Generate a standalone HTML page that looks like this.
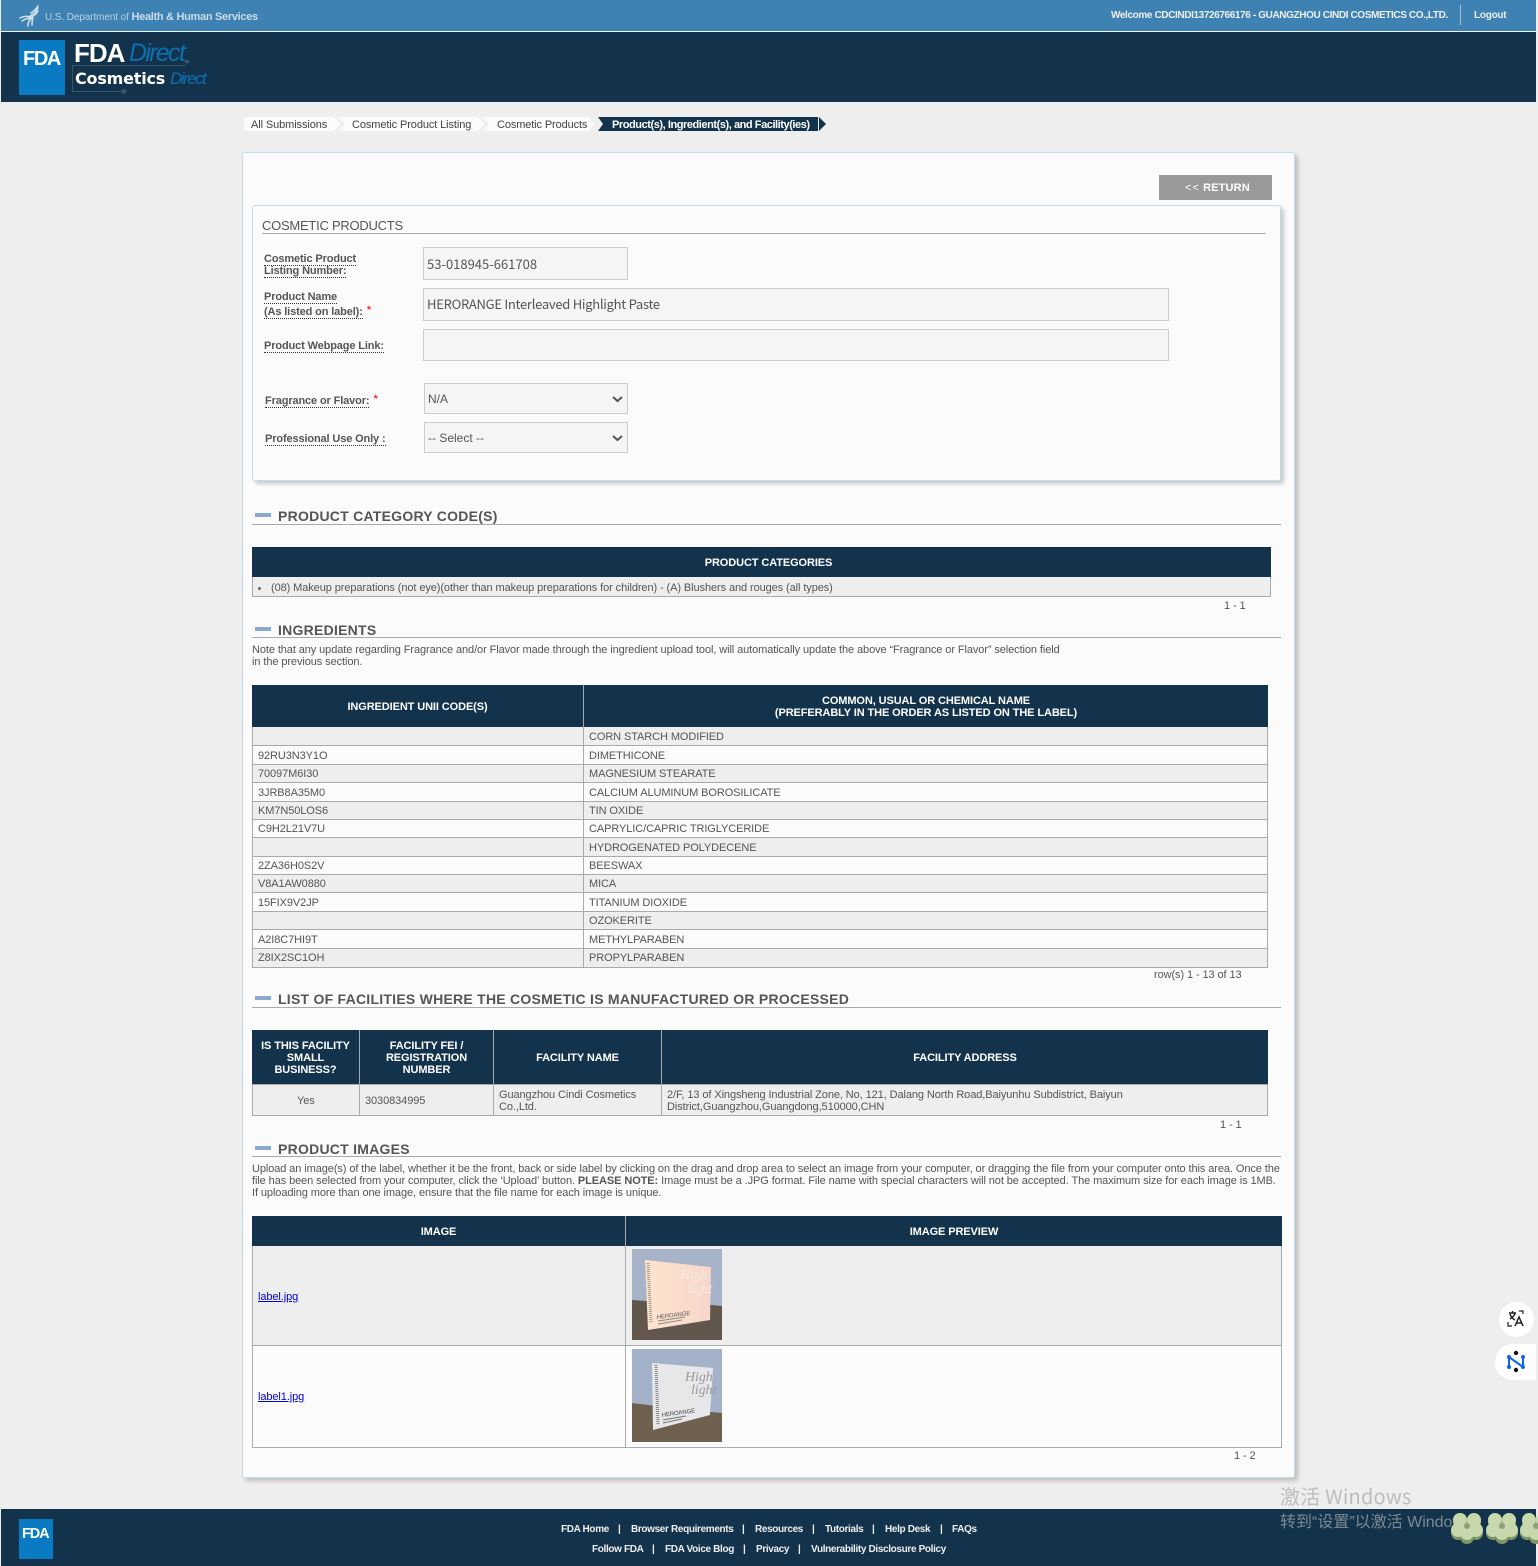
<!DOCTYPE html>
<html lang="en"><head><meta charset="utf-8"><title>FDA Direct - Cosmetics Direct</title>
<style>
html,body{margin:0;padding:0}
body{position:relative;width:1538px;height:1566px;overflow:hidden;background:#eee;font-family:"Liberation Sans",Arial,sans-serif;font-size:11px;letter-spacing:-.09px;color:#555}
div,span,a{box-sizing:border-box}
.a{position:absolute}
.t{position:absolute;white-space:nowrap;line-height:12px}
.b{font-weight:bold}
.box{position:absolute;background:#fbfbfb;border:1px solid #c3dcea;border-radius:3px;box-shadow:3px 3px 4px rgba(0,0,0,.2)}
.th{position:absolute;color:#fff;font-weight:bold;font-size:11px;text-align:center;line-height:12px;display:flex;align-items:center;justify-content:center;background:#12334b;letter-spacing:-.1px;padding-top:2px}
.h2{position:absolute;white-space:nowrap;font-size:14px;line-height:16px;font-weight:bold;color:#555;letter-spacing:.25px}
.dash{position:absolute;left:255px;width:16px;height:4px;background:#8aa9cf}
.hr{position:absolute;height:1px;background:#aaa}
.lab{position:absolute;white-space:nowrap;font-weight:bold;font-size:11px;line-height:12px;color:#555;letter-spacing:-.13px}
.lab span{border-bottom:1px dotted #333}
.in{position:absolute;background:#f5f5f5;border:1px solid #ccc;font-family:"Noto Sans CJK SC",sans-serif;font-size:13px;letter-spacing:0;color:#555;padding-left:3px;display:flex;align-items:center}
.sel{font-family:"Liberation Sans",sans-serif;font-size:12px}
.sel svg{position:absolute;right:4px;top:50%;margin-top:-4px}
.star{color:#e00;font-weight:normal;font-size:12px;position:relative;top:-1px;margin-left:1px}
.row{position:absolute;left:252px;width:1016px;height:19px;border:1px solid #aaa;border-top:0}
.row .l,.row .r{position:absolute;top:4px;line-height:12px;white-space:nowrap}
.row.s{height:18px}
.row.s .l,.row.s .r{top:3px}
.row .l{left:5px}.row .r{left:336px}
.row i{position:absolute;left:330px;top:0;bottom:0;width:1px;background:#aaa}
.g{background:#eee}.w{background:#fbfbfb}
a{color:#00d;text-decoration:underline}
.f{position:absolute;white-space:nowrap;color:#eee;font-weight:bold;font-size:10px;line-height:12px;letter-spacing:-.35px}
.ln{position:absolute;background:#aaa}
</style></head><body>

<!-- top bars -->
<div class="a" style="left:1px;top:0;width:1535px;height:31px;background:#3e82b3"></div>
<div class="a" style="left:1px;top:31px;width:1535px;height:1px;background:#eef4f8"></div>
<div class="a" style="left:1px;top:32px;width:1535px;height:70px;background:#12334b"></div>

<svg class="a" style="left:19px;top:5px" width="22" height="22" viewBox="0 0 22 22" fill="none" stroke="#d5e2ec" stroke-width="1.5" stroke-linecap="round">
<path d="M19 1C17 4 15 6 12 8"/><path d="M19 3C17 7 15 9 11 11"/><path d="M19 6C17 10 14 12 9 13"/><path d="M1 13C5 11 8 11 11 12"/><path d="M3 16C6 14 9 13 12 14"/><path d="M9 21C9 18 10 15 13 13"/><path d="M13 20C13 17 13 15 14 13"/>
</svg>
<div class="t" style="left:45px;top:11px;font-size:10px;color:#b9d0e0;letter-spacing:-.1px">U.S. Department of <span class="b" style="font-size:11px;letter-spacing:-.3px;color:#c9dbe8">Health &amp; Human Services</span></div>
<div class="t b" style="left:1111px;top:10px;font-size:10px;color:#eee;letter-spacing:-.38px">Welcome CDCINDI13726766176 - GUANGZHOU CINDI COSMETICS CO.,LTD.</div>
<div class="a" style="left:1460px;top:5px;width:1px;height:20px;background:#a9bdcb"></div>
<div class="t b" style="left:1474px;top:10px;font-size:10px;color:#eee;letter-spacing:-.25px">Logout</div>

<!-- logo -->
<div class="a" style="left:19px;top:40px;width:46px;height:55px;background:#0a7bc2"></div>
<div class="t b" style="left:23px;top:48px;font-size:20px;line-height:22px;color:#fff;letter-spacing:-1.4px">FDA</div>
<div class="t b" style="left:74px;top:39px;font-size:26px;line-height:28px;color:#fff;letter-spacing:-1px">FDA</div>
<div class="t" style="left:129px;top:39px;font-size:25px;line-height:28px;color:#0c70b0;font-style:italic;letter-spacing:-1.7px">Direct</div>
<svg class="a" style="left:70px;top:60px" width="125" height="34" viewBox="0 0 125 34" fill="none" stroke="#3b5568"><path d="M116 5.5H2.5V31.5H53"/><circle cx="117" cy="1" r="2" fill="#3b5568"/><circle cx="54" cy="31.5" r="2" fill="#3b5568"/></svg>
<div class="t b" style="left:75px;top:70px;font-family:'DejaVu Sans',sans-serif;font-size:16px;line-height:18px;color:#fff;letter-spacing:-.2px">Cosmetics</div>
<div class="t" style="left:170px;top:70px;font-size:17px;line-height:18px;color:#0c70b0;font-style:italic;letter-spacing:-1.5px">Direct</div>

<!-- breadcrumb -->
<div class="a" style="left:244px;top:117px;width:350px;height:14px;background:#fbfbfb"></div>
<svg class="a" style="left:330px;top:117px" width="270" height="14"><path d="M4 0 11 7 4 14H8L15 7 8 0ZM148 0 155 7 148 14H152L159 7 152 0ZM258 0 265 7 258 14H268V0Z" fill="#eee"/></svg>
<div class="t" style="left:251px;top:119px;font-size:11px;color:#444;letter-spacing:-.1px">All Submissions</div>
<div class="t" style="left:352px;top:119px;font-size:11px;color:#444;letter-spacing:-.1px">Cosmetic Product Listing</div>
<div class="t" style="left:497px;top:119px;font-size:11px;color:#444;letter-spacing:-.12px">Cosmetic Products</div>
<svg class="a" style="left:598px;top:117px" width="229" height="15"><path d="M0 0H220V14H0L5 7Z" fill="#12334b"/><path d="M221 0 228 7 221 14Z" fill="#12334b"/></svg>
<div class="t" style="left:612px;top:119px;font-size:11px;color:#fff;font-weight:bold;letter-spacing:-.44px">Product(s), Ingredient(s), and Facility(ies)</div>

<!-- main card -->
<div class="box" style="left:242px;top:152px;width:1053px;height:1326px"></div>
<div class="a b" style="left:1159px;top:175px;width:113px;height:25px;background:#999;color:#fff;font-size:11px;line-height:27px;padding-left:26px;letter-spacing:.15px"><span style="font-weight:normal;letter-spacing:1px">&lt;&lt;</span> RETURN</div>

<!-- cosmetic products box -->
<div class="box" style="left:252px;top:205px;width:1029px;height:276px"></div>
<div class="t" style="left:262px;top:218px;font-size:13px;line-height:15px;color:#555;letter-spacing:-.25px">COSMETIC PRODUCTS</div>
<div class="hr" style="left:262px;top:233px;width:1004px"></div>

<div class="lab" style="left:264px;top:253px"><span>Cosmetic Product</span><br><span>Listing Number:</span></div>
<div class="lab" style="left:264px;top:291px"><span>Product Name</span></div>
<div class="lab" style="left:264px;top:305px"><span>(As listed on label):</span> <b class="star">*</b></div>
<div class="lab" style="left:264px;top:340px"><span>Product Webpage Link:</span></div>
<div class="lab" style="left:265px;top:394px"><span>Fragrance or Flavor:</span> <b class="star">*</b></div>
<div class="lab" style="left:265px;top:433px"><span>Professional Use Only :</span></div>

<div class="in" style="left:423px;top:247px;width:205px;height:33px">53-018945-661708</div>
<div class="in" style="left:423px;top:288px;width:746px;height:33px;padding-bottom:2px;letter-spacing:-.27px">HERORANGE Interleaved Highlight Paste</div>
<div class="in" style="left:423px;top:329px;width:746px;height:32px"></div>
<div class="in sel" style="left:424px;top:383px;width:204px;height:31px">N/A<svg width="11" height="8" viewBox="0 0 11 8"><path d="M1 2L5.5 6 10 2" fill="none" stroke="#555" stroke-width="2"/></svg></div>
<div class="in sel" style="left:424px;top:422px;width:204px;height:31px">-- Select --<svg width="11" height="8" viewBox="0 0 11 8"><path d="M1 2L5.5 6 10 2" fill="none" stroke="#555" stroke-width="2"/></svg></div>

<!-- categories -->
<div class="dash" style="top:513px"></div>
<div class="h2" style="left:278px;top:508px">PRODUCT CATEGORY CODE(S)</div>
<div class="hr" style="left:252px;top:524px;width:1029px"></div>
<div class="th" style="left:252px;top:547px;width:1019px;height:30px;padding-left:14px">PRODUCT CATEGORIES</div>
<div class="a g" style="left:252px;top:577px;width:1019px;height:20px;border:1px solid #aaa;border-top:0"></div>
<div class="a" style="left:258px;top:587px;width:3px;height:3px;border-radius:50%;background:#666"></div>
<div class="t" style="left:271px;top:582px">(08) Makeup preparations (not eye)(other than makeup preparations for children) - (A) Blushers and rouges (all types)</div>
<div class="t" style="left:1224px;top:600px">1 - 1</div>

<!-- ingredients -->
<div class="dash" style="top:627px"></div>
<div class="h2" style="left:278px;top:622px">INGREDIENTS</div>
<div class="hr" style="left:252px;top:637px;width:1029px"></div>
<div class="t" style="left:252px;top:644px;letter-spacing:-.095px">Note that any update regarding Fragrance and/or Flavor made through the ingredient upload tool, will automatically update the above “Fragrance or Flavor” selection field</div>
<div class="t" style="left:252px;top:656px">in the previous section.</div>

<div class="th" style="left:252px;top:685px;width:331px;height:42px">INGREDIENT UNII CODE(S)</div>
<div class="th" style="left:584px;top:685px;width:684px;height:42px">COMMON, USUAL OR CHEMICAL NAME<br>(PREFERABLY IN THE ORDER AS LISTED ON THE LABEL)</div>
<div class="a" style="left:583px;top:685px;width:1px;height:42px;background:#aaa"></div>

<div class="row g" style="top:727px"><i></i><span class="r">CORN STARCH MODIFIED</span></div>
<div class="row w" style="top:746px"><i></i><span class="l">92RU3N3Y1O</span><span class="r">DIMETHICONE</span></div>
<div class="row g s" style="top:765px"><i></i><span class="l">70097M6I30</span><span class="r">MAGNESIUM STEARATE</span></div>
<div class="row w" style="top:783px"><i></i><span class="l">3JRB8A35M0</span><span class="r">CALCIUM ALUMINUM BOROSILICATE</span></div>
<div class="row g s" style="top:802px"><i></i><span class="l">KM7N50LOS6</span><span class="r">TIN OXIDE</span></div>
<div class="row w s" style="top:820px"><i></i><span class="l">C9H2L21V7U</span><span class="r">CAPRYLIC/CAPRIC TRIGLYCERIDE</span></div>
<div class="row g" style="top:838px"><i></i><span class="r">HYDROGENATED POLYDECENE</span></div>
<div class="row w s" style="top:857px"><i></i><span class="l">2ZA36H0S2V</span><span class="r">BEESWAX</span></div>
<div class="row g s" style="top:875px"><i></i><span class="l">V8A1AW0880</span><span class="r">MICA</span></div>
<div class="row w" style="top:893px"><i></i><span class="l">15FIX9V2JP</span><span class="r">TITANIUM DIOXIDE</span></div>
<div class="row g s" style="top:912px"><i></i><span class="r">OZOKERITE</span></div>
<div class="row w" style="top:930px"><i></i><span class="l">A2I8C7HI9T</span><span class="r">METHYLPARABEN</span></div>
<div class="row g s" style="top:949px;height:19px"><i></i><span class="l">Z8IX2SC1OH</span><span class="r">PROPYLPARABEN</span></div>
<div class="t" style="left:1154px;top:969px">row(s) 1 - 13 of 13</div>

<!-- facilities -->
<div class="dash" style="top:996px"></div>
<div class="h2" style="left:278px;top:991px">LIST OF FACILITIES WHERE THE COSMETIC IS MANUFACTURED OR PROCESSED</div>
<div class="hr" style="left:252px;top:1007px;width:1029px"></div>
<div class="th" style="left:252px;top:1030px;width:107px;height:54px">IS THIS FACILITY<br>SMALL<br>BUSINESS?</div>
<div class="th" style="left:360px;top:1030px;width:133px;height:54px">FACILITY FEI /<br>REGISTRATION<br>NUMBER</div>
<div class="th" style="left:494px;top:1030px;width:167px;height:54px">FACILITY NAME</div>
<div class="th" style="left:662px;top:1030px;width:606px;height:54px">FACILITY ADDRESS</div>
<div class="ln" style="left:359px;top:1030px;width:1px;height:54px"></div>
<div class="ln" style="left:493px;top:1030px;width:1px;height:54px"></div>
<div class="ln" style="left:661px;top:1030px;width:1px;height:54px"></div>
<div class="a g" style="left:252px;top:1084px;width:1016px;height:32px;border:1px solid #aaa"></div>
<div class="ln" style="left:359px;top:1084px;width:1px;height:32px"></div>
<div class="ln" style="left:493px;top:1084px;width:1px;height:32px"></div>
<div class="ln" style="left:661px;top:1084px;width:1px;height:32px"></div>
<div class="t" style="left:297px;top:1095px">Yes</div>
<div class="t" style="left:365px;top:1095px">3030834995</div>
<div class="t" style="left:499px;top:1089px">Guangzhou Cindi Cosmetics<br>Co.,Ltd.</div>
<div class="t" style="left:667px;top:1089px">2/F, 13 of Xingsheng Industrial Zone, No, 121, Dalang North Road,Baiyunhu Subdistrict, Baiyun<br>District,Guangzhou,Guangdong,510000,CHN</div>
<div class="t" style="left:1220px;top:1119px">1 - 1</div>

<!-- images -->
<div class="dash" style="top:1146px"></div>
<div class="h2" style="left:278px;top:1141px">PRODUCT IMAGES</div>
<div class="hr" style="left:252px;top:1156px;width:1029px"></div>
<div class="t" style="left:252px;top:1163px">Upload an image(s) of the label, whether it be the front, back or side label by clicking on the drag and drop area to select an image from your computer, or dragging the file from your computer onto this area. Once the</div>
<div class="t" style="left:252px;top:1175px">file has been selected from your computer, click the ‘Upload’ button. <b>PLEASE NOTE:</b> Image must be a .JPG format. File name with special characters will not be accepted. The maximum size for each image is 1MB.</div>
<div class="t" style="left:252px;top:1187px">If uploading more than one image, ensure that the file name for each image is unique.</div>

<div class="th" style="left:252px;top:1216px;width:373px;height:30px">IMAGE</div>
<div class="th" style="left:626px;top:1216px;width:656px;height:30px">IMAGE PREVIEW</div>
<div class="ln" style="left:625px;top:1216px;width:1px;height:30px"></div>
<div class="a g" style="left:252px;top:1246px;width:1030px;height:100px;border:1px solid #aaa;border-top:0"></div>
<div class="a w" style="left:252px;top:1346px;width:1030px;height:102px;border:1px solid #aaa;border-top:0"></div>
<div class="ln" style="left:625px;top:1246px;width:1px;height:202px"></div>
<a class="t" href="#" style="left:258px;top:1291px">label.jpg</a>
<a class="t" href="#" style="left:258px;top:1391px">label1.jpg</a>

<svg class="a" style="left:632px;top:1249px" width="90" height="91" viewBox="0 0 90 91">
<defs><linearGradient id="p" x1="0" y1="0" x2="1" y2="0"><stop offset="0" stop-color="#fde4cf"/><stop offset="1" stop-color="#f7d6cb"/></linearGradient></defs>
<rect width="90" height="91" fill="#a6b3c8"/><path d="M0 51 79 56 90 57V91H0Z" fill="#62574c"/>
<path d="M13 11 79 18 78 71 16 81Z" fill="url(#p)"/>
<path d="M16 14 19 74" stroke="#a99a8b" stroke-width="3" stroke-dasharray="1 1"/>
<text x="25" y="70" font-family="Liberation Sans" font-size="6" fill="#5d5650" transform="rotate(-7 25 70)">HEROANGE</text>
<path d="M26 72 53 68M26 75 50 71" stroke="#8f8880" stroke-width="1"/>
<text x="48" y="30" font-family="Liberation Serif" font-size="14" font-style="italic" fill="#f6e9e3">High</text><text x="55" y="44" font-family="Liberation Serif" font-size="14" font-style="italic" fill="#f6e9e3">light</text>
</svg>
<svg class="a" style="left:632px;top:1349px" width="90" height="93" viewBox="0 0 90 93">
<rect width="90" height="93" fill="#a3b2c8"/><path d="M0 54 40 59 90 64V93H0Z" fill="#6f6150"/>
<path d="M20 14 81 19 78 66 21 81Z" fill="#e7e7e9"/>
<path d="M24 16 26 76" stroke="#888" stroke-width="3" stroke-dasharray="1 1"/>
<text x="30" y="68" font-family="Liberation Sans" font-size="6" fill="#444" transform="rotate(-8 30 68)">HEROANGE</text>
<path d="M31 71 54 67M31 74 50 70" stroke="#777" stroke-width="1"/>
<text x="53" y="32" font-family="Liberation Serif" font-size="14" font-style="italic" fill="#9a9a9c">High</text><text x="59" y="45" font-family="Liberation Serif" font-size="14" font-style="italic" fill="#9a9a9c">light</text>
</svg>
<div class="t" style="left:1234px;top:1450px">1 - 2</div>

<!-- footer -->
<div class="a" style="left:1px;top:1509px;width:1535px;height:57px;background:#12334b"></div>
<div class="a" style="left:19px;top:1519px;width:34px;height:40px;background:#0a7bc2"></div>
<div class="t b" style="left:22px;top:1526px;font-size:14.5px;line-height:16px;color:#fff;letter-spacing:-1.1px">FDA</div>

<div class="f" style="left:561px;top:1524px">FDA Home</div><div class="f" style="left:618px;top:1524px">|</div>
<div class="f" style="left:631px;top:1524px">Browser Requirements</div><div class="f" style="left:742px;top:1524px">|</div>
<div class="f" style="left:755px;top:1524px">Resources</div><div class="f" style="left:812px;top:1524px">|</div>
<div class="f" style="left:825px;top:1524px">Tutorials</div><div class="f" style="left:872px;top:1524px">|</div>
<div class="f" style="left:885px;top:1524px">Help Desk</div><div class="f" style="left:940px;top:1524px">|</div>
<div class="f" style="left:952px;top:1524px">FAQs</div>
<div class="f" style="left:592px;top:1544px">Follow FDA</div><div class="f" style="left:652px;top:1544px">|</div>
<div class="f" style="left:665px;top:1544px">FDA Voice Blog</div><div class="f" style="left:743px;top:1544px">|</div>
<div class="f" style="left:756px;top:1544px">Privacy</div><div class="f" style="left:798px;top:1544px">|</div>
<div class="f" style="left:811px;top:1544px">Vulnerability Disclosure Policy</div>

<!-- windows watermark -->
<div class="t" style="left:1280px;top:1484px;font-family:'Noto Sans CJK SC',sans-serif;font-size:20px;line-height:24px;letter-spacing:.2px;color:#bdbdbd">激活 Windows</div>
<div class="t" style="left:1280px;top:1512px;font-family:'Liberation Sans','Noto Sans CJK SC',sans-serif;font-size:16px;line-height:22px;letter-spacing:0;color:#7d8992">转到“设置”以激活 Windows</div>

<!-- flowers -->
<svg class="a" style="left:1450px;top:1510px" width="88" height="36" viewBox="0 0 88 36">
<defs><g id="fl"><g fill="#7f9565" transform="translate(0 3)"><circle cx="-7" cy="-6" r="7"/><circle cx="7" cy="-6" r="7"/><circle cx="-9" cy="4" r="7"/><circle cx="9" cy="4" r="7"/><circle cx="0" cy="8" r="7"/></g><g fill="#c6d8ac"><circle cx="-7" cy="-6" r="7"/><circle cx="7" cy="-6" r="7"/><circle cx="-9" cy="4" r="7"/><circle cx="9" cy="4" r="7"/><circle cx="0" cy="7" r="7"/></g><circle cx="0" cy="0" r="3" fill="#8ea27a"/></g></defs>
<use href="#fl" x="17" y="16"/><use href="#fl" x="52" y="16"/><use href="#fl" x="86" y="16"/>
</svg>

<!-- floating buttons -->
<div class="a" style="left:1499px;top:1302px;width:35px;height:35px;border-radius:50%;background:#fff"></div>
<svg class="a" style="left:1507px;top:1310px" width="18" height="18" viewBox="0 0 18 18" fill="none" stroke="#222" stroke-width="1.5"><path d="M2 3H9M5.5 1V3M3 9C6 7 8 5 8 3M3 4C4 7 6 9 8 10"/><path d="M8 16 12 7 16 16M9.5 13H14.5"/><path d="M12 1H16V4M1 12V16H5" stroke-width="1.2"/></svg>
<div class="a" style="left:1495px;top:1344px;width:41px;height:36px;border-radius:18px 0 0 18px;background:#fff"></div>
<svg class="a" style="left:1506px;top:1350px" width="20" height="24" viewBox="0 0 20 24"><path d="M3 7V17M3 7 17 17M17 7V17" stroke="#0d63f0" stroke-width="2" fill="none"/><circle cx="3" cy="7" r="2" fill="#0d63f0"/><circle cx="3" cy="17" r="2" fill="#0d63f0"/><circle cx="17" cy="7" r="2" fill="#0d63f0"/><circle cx="17" cy="17" r="2" fill="#0d63f0"/><circle cx="10" cy="3" r="2.2" fill="#111"/><circle cx="10" cy="20" r="2.2" fill="#111"/></svg>
</body></html>
